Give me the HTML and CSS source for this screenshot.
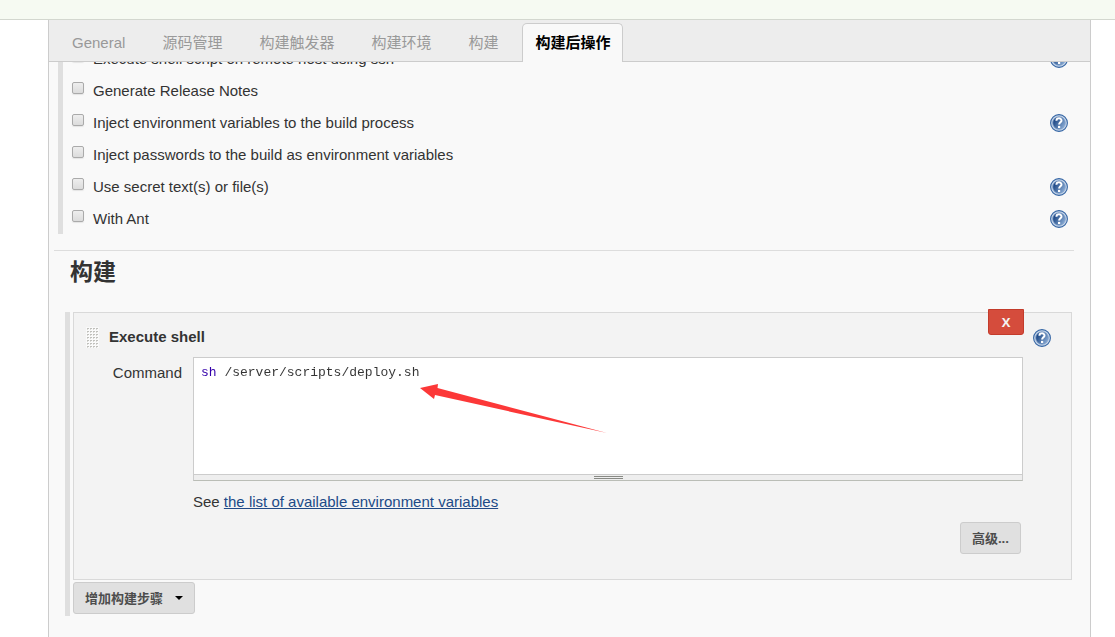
FILE: index.html
```html
<!DOCTYPE html>
<html lang="zh-CN">
<head>
<meta charset="utf-8">
<title>构建后操作</title>
<link rel="stylesheet" href="styles.css">
</head>
<body>
<svg class="defs" aria-hidden="true">
  <defs>
    <linearGradient id="disc" x1="0" y1="0.2" x2="1" y2="0.8">
      <stop offset="0.15" stop-color="#204a87"/>
      <stop offset="1" stop-color="#8fb0d8"/>
    </linearGradient>
    <pattern id="dots" width="3" height="3" patternUnits="userSpaceOnUse">
      <rect width="3" height="3" fill="#fafafa"/>
      <rect x="1" y="1" width="2" height="1" fill="#c0c0bc"/>
      <rect x="1" y="2" width="1" height="1" fill="#d8d8d4"/>
    </pattern>
    <symbol id="help" viewBox="0 0 18 18">
      <circle cx="9" cy="9" r="8.4" fill="#c9d7e9" stroke="#3465a4" stroke-width="1.1"/>
      <circle cx="9" cy="9" r="6.3" fill="url(#disc)" stroke="#7f9fca" stroke-width="0.8"/>
      <path d="M6.4 6.7C6.6 3.6 11.6 3.6 11.5 6.6C11.4 8.3 9.2 8.5 9.1 10.5" fill="none" stroke="#fff" stroke-width="2"/>
      <rect x="8" y="11.9" width="2.2" height="2.1" fill="#fff"/>
    </symbol>
  </defs>
</svg>
<header class="topbar"></header>
<main class="panel">
  <nav class="tabs">
    <button class="tab" type="button">General</button>
    <button class="tab" type="button">源码管理</button>
    <button class="tab" type="button">构建触发器</button>
    <button class="tab" type="button">构建环境</button>
    <button class="tab" type="button">构建</button>
    <button class="tab active" type="button">构建后操作</button>
  </nav>
  <div class="content">
    <ul class="options">
      <li class="option"><input class="check" type="checkbox" id="o1"><label for="o1">Execute shell script on remote host using ssh</label><button class="help" type="button" aria-label="Help"><svg><use href="#help"/></svg></button></li>
      <li class="option"><input class="check" type="checkbox" id="o2"><label for="o2">Generate Release Notes</label></li>
      <li class="option"><input class="check" type="checkbox" id="o3"><label for="o3">Inject environment variables to the build process</label><button class="help" type="button" aria-label="Help"><svg><use href="#help"/></svg></button></li>
      <li class="option"><input class="check" type="checkbox" id="o4"><label for="o4">Inject passwords to the build as environment variables</label></li>
      <li class="option"><input class="check" type="checkbox" id="o5"><label for="o5">Use secret text(s) or file(s)</label><button class="help" type="button" aria-label="Help"><svg><use href="#help"/></svg></button></li>
      <li class="option"><input class="check" type="checkbox" id="o6"><label for="o6">With Ant</label><button class="help" type="button" aria-label="Help"><svg><use href="#help"/></svg></button></li>
    </ul>
    <section class="build">
      <h2 class="heading">构建</h2>
      <div class="steps">
        <div class="step">
          <div class="step-head">
            <svg class="handle"><rect width="13" height="21" fill="url(#dots)"/></svg>
            <h3 class="step-title">Execute shell</h3>
            <button class="help" type="button" aria-label="Help"><svg><use href="#help"/></svg></button>
          </div>
          <button class="delete" type="button">X</button>
          <div class="field">
            <label class="field-label" for="command">Command</label>
            <div class="field-body">
              <div class="editor">
                <textarea class="code" id="command" spellcheck="false">sh /server/scripts/deploy.sh</textarea>
                <div class="resizer"><span class="grip"></span></div>
                <svg class="arrow" viewBox="0 0 188 50" aria-hidden="true"><path d="M0 4L18 0L17.500 4L187 49L15 11L14 15Z" fill="#fc3838"/></svg>
              </div>
              <p class="hint">See <a class="link" href="#variables">the list of available environment variables</a></p>
              <div class="actions"><button class="button" type="button">高级...</button></div>
            </div>
          </div>
        </div>
        <button class="button add" type="button">增加构建步骤<svg class="caret" viewBox="0 0 8 4"><path d="M0 0H8L4 4Z"/></svg></button>
      </div>
    </section>
  </div>
</main>
</body>
</html>
```

FILE: styles.css
```css
* { box-sizing: border-box; }

body {
  margin: 0;
  min-height: 100vh;
  display: flex;
  flex-direction: column;
  background: #fff;
  color: #333;
  font: 15px/32px "Liberation Sans", "Noto Sans CJK SC", sans-serif;
}

button, textarea { font: inherit; color: inherit; }
ul, h2, h3, p { margin: 0; padding: 0; }

.defs { position: absolute; width: 0; height: 0; }

.topbar {
  height: 20px;
  background: #f6faf2;
  border-bottom: 1px solid #d3d7cf;
}

.panel {
  flex: 1;
  margin: 0 24px 0 48px;
  background: #f9f9f9;
  border: solid #ccc;
  border-width: 0 1px;
}

.tabs {
  display: flex;
  align-items: flex-end;
  gap: 11px;
  height: 42px;
  padding-left: 10px;
  background: #ededed;
  border-bottom: 1px solid #ccc;
}

.tab {
  height: 39px;
  margin-bottom: -1px;
  padding: 0 12px;
  border: 1px solid transparent;
  border-radius: 5px 5px 0 0;
  background: none;
  color: #999;
  line-height: 36px;
}

.tab.active {
  background: #f9f9f9;
  border-color: #ccc;
  border-bottom: 0;
  color: #000;
  font-weight: bold;
}

.content { overflow: hidden; padding: 0 16px 0 5px; }

.options {
  margin: -19px 0 16px 4px;
  padding: 0 6px 0 9px;
  height: 191px;
  border-left: 5px solid #dfdfdf;
  list-style: none;
}

.option { display: flex; align-items: center; height: 32px; }

.check {
  appearance: none;
  width: 12px;
  height: 12px;
  margin: 0 9px 6px 0;
  border: 1px solid #aaa;
  border-radius: 2px;
  background: linear-gradient(#eee, #dcdcdc);
  box-shadow: 0 1px 1px #e4e4e4;
}

.check:checked { background: #3465a4; }

.help {
  display: flex;
  margin-left: auto;
  padding: 0;
  border: 0;
  background: none;
}

.help svg { width: 18px; height: 18px; }

.build { border-top: 1px solid #ddd; }

.heading {
  padding: 5px 0 0 16px;
  font-size: 23px;
  line-height: 32px;
}

.steps {
  margin: 24px 2px 0 11px;
  padding-left: 3px;
  border-left: 5px solid #dfdfdf;
  padding-bottom: 2px;
}

.step {
  position: relative;
  margin-bottom: 2px;
  padding: 8px 0 25px;
  background: #f3f3f3;
  border: 1px solid #d9d9d9;
}

.step-head {
  display: flex;
  align-items: center;
  height: 32px;
  padding: 0 20px 0 12px;
}

.step-head .help { padding-top: 2px; }

.handle { width: 13px; height: 21px; margin-right: 10px; }
.step-title { font-size: 15px; }

.delete {
  position: absolute;
  top: -4px;
  right: 47px;
  width: 36px;
  height: 26px;
  padding: 0;
  border: 1px solid #c33b2b;
  border-radius: 0 0 3px 3px;
  background: #d54c3c;
  color: #f3f3f3;
  font: bold 13px/24px "Open Sans", sans-serif;
}

.field {
  display: grid;
  grid-template-columns: 108px 1fr;
  column-gap: 11px;
  padding: 4px 48px 0 0;
}

.field-label { text-align: right; }

.editor {
  position: relative;
  background: #fff;
  border: 1px solid #ccc;
  border-bottom-color: #babdb6;
}

.code {
  display: block;
  width: 100%;
  height: 116px;
  padding: 7px;
  border: 0;
  outline: 0;
  resize: none;
  background: linear-gradient(90deg, #30a 24px, #333 24px);
  background-clip: text;
  color: transparent;
  caret-color: #333;
  font: 13px/16px "Liberation Mono", monospace;
}

.resizer {
  display: flex;
  justify-content: center;
  height: 6px;
  padding-top: 1px;
  background: #eee;
  border-top: 1px solid #ccc;
}

.grip {
  width: 29px;
  height: 3px;
  border: solid #888a85;
  border-width: 1px 0;
}

.arrow {
  position: absolute;
  top: 26px;
  left: 226px;
  width: 188px;
  height: 50px;
  pointer-events: none;
}

.hint { padding: 5px 0 4px; }
.link { color: #204a87; }

.actions { display: flex; justify-content: flex-end; padding-right: 2px; }

.button {
  height: 32px;
  padding: 0 11px;
  border: 1px solid #ccc;
  border-radius: 3px;
  background: #e0e0e0;
  color: #4d4d4d;
  font: bold 13px/28px "Open Sans", "Noto Sans CJK SC", sans-serif;
}

.add { display: flex; align-items: center; gap: 12px; }
.caret { width: 8px; height: 4px; fill: #000; }
```
